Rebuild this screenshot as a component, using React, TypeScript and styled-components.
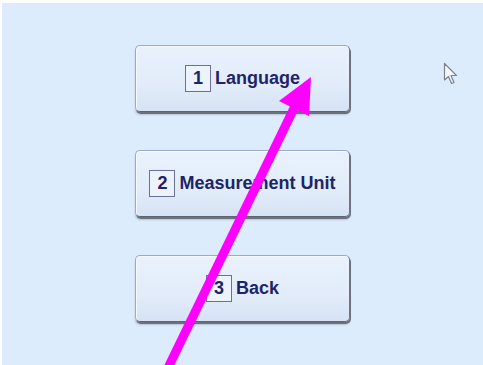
import React from "react";
import styled, { createGlobalStyle } from "styled-components";

const Global = createGlobalStyle`
  html, body { margin: 0; padding: 0; background: #ffffff; }
  body { font-family: "Liberation Sans", Arial, sans-serif; }
`;

const Screen = styled.div`
  position: relative;
  margin: 3px 0 0 2px;
  width: 481px;
  height: 362px;
  background: #ddecfd;
  overflow: hidden;
`;

const Menu = styled.div`
  display: flex;
  flex-direction: column;
  align-items: center;
  gap: 38px;
  padding-top: 42px;
`;

const MenuButton = styled.div`
  box-sizing: border-box;
  width: 215px;
  height: 67px;
  display: flex;
  align-items: center;
  justify-content: center;
  gap: 4px;
  border-radius: 5px;
  border: 1px solid #9aabc8;
  border-right-color: #6e7584;
  border-bottom-color: #5d6370;
  background: linear-gradient(180deg, #e9f1fc 0%, #e2ecfa 60%, #d6e3f5 100%);
  box-shadow: inset 1px 1px 0 #f6f9ff, 1px 2px 0 #6c717d, 0 3px 2px rgba(60, 70, 90, 0.25);
`;

const KeyBox = styled.span`
  box-sizing: border-box;
  width: 26px;
  height: 27px;
  display: flex;
  align-items: center;
  justify-content: center;
  border: 1px solid #6b7196;
  background: #ecf3fd;
  color: #1e2468;
  font-size: 18px;
  font-weight: bold;
`;

const Label = styled.span`
  color: #1e2468;
  font-size: 18px;
  font-weight: bold;
  white-space: nowrap;
`;

const Cursor = styled.svg`
  position: absolute;
  left: 441px;
  top: 59px;
`;

const Overlay = styled.svg`
  position: absolute;
  left: -2px;
  top: -3px;
  pointer-events: none;
`;

const items = [
  { key: "1", label: "Language" },
  { key: "2", label: "Measurement Unit" },
  { key: "3", label: "Back" },
];

export default function App() {
  return (
    <>
      <Global />
      <Screen>
        <Menu>
          {items.map((it) => (
            <MenuButton key={it.key}>
              <KeyBox>{it.key}</KeyBox>
              <Label>{it.label}</Label>
            </MenuButton>
          ))}
        </Menu>
        <Cursor width="16" height="24" viewBox="0 0 16 24">
          <path
            d="M1.5 1.5 L1.5 18 L5.5 14.5 L8.5 21.5 L11 20.5 L8 13.5 L13.5 13.5 Z"
            fill="#f4f7fb"
            stroke="#7d8290"
            strokeWidth="1.2"
            strokeLinejoin="round"
          />
        </Cursor>
        <Overlay width="483" height="365" viewBox="0 0 483 365">
          <line x1="166" y1="372" x2="298" y2="100" stroke="#ff00ff" strokeWidth="9" />
          <polygon points="311,77 279,101 309,116" fill="#ff00ff" />
        </Overlay>
      </Screen>
    </>
  );
}
